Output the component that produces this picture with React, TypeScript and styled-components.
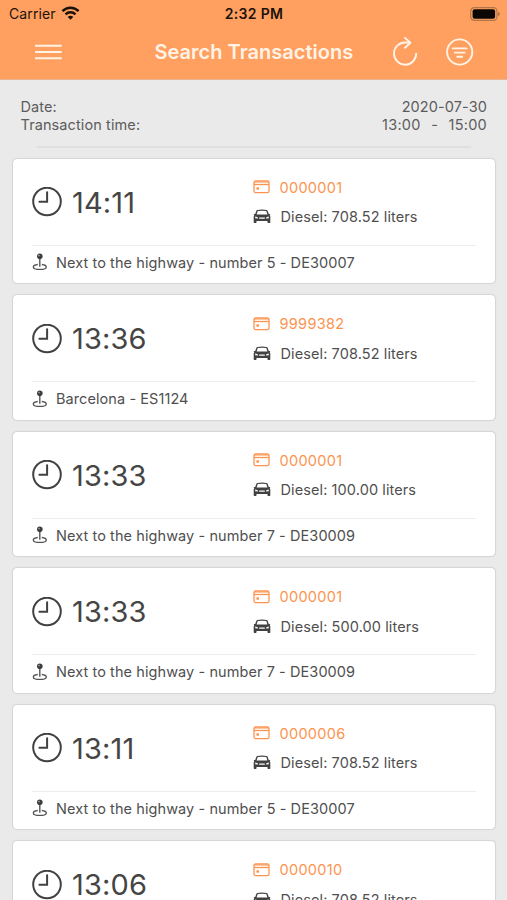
import React from "react";
import styled, { createGlobalStyle } from "styled-components";

const GlobalStyle = createGlobalStyle`
  * { box-sizing: border-box; }
  html, body { margin: 0; padding: 0; height: 900px; overflow: hidden; background: #eaeaea; }
  body { font-family: Inter, "Liberation Sans", sans-serif; color: #4c4c4c; }
  svg { display: block; flex: none; }
`;

const Screen = styled.main`
  width: 507px;
  height: 900px;
  overflow: hidden;
  display: flex;
  flex-direction: column;
  background: #eaeaea;
`;

const Header = styled.header`
  flex: none;
  height: 80px;
  background: #ffa061;
  border-bottom: 1px solid #e9b48f;
`;

const StatusBar = styled.div`
  height: 27px;
  padding: 0 7px 0 9px;
  display: grid;
  grid-template-columns: 1fr auto 1fr;
  align-items: center;
  color: #1c120b;
  font-size: 14px;
  line-height: 27px;
`;

const Carrier = styled.div`
  display: flex;
  align-items: center;
  gap: 5px;
  letter-spacing: 0.1px;
`;

const Clock = styled.div`
  margin-right: 1px;
  font-weight: 600;
  letter-spacing: 0.3px;
`;

const Battery = styled.div`
  display: flex;
  justify-content: flex-end;
`;

const NavBar = styled.nav`
  height: 50px;
  padding: 0 33px 0 34px;
  display: flex;
  align-items: center;
  color: #fff3e6;
`;

const Title = styled.h1`
  margin: 0 0 0 92.5px;
  width: 200px;
  font-size: 20px;
  line-height: 51px;
  font-weight: 600;
  letter-spacing: 0.02px;
  white-space: nowrap;
`;

const Actions = styled.div`
  margin-left: auto;
  display: flex;
  align-items: center;
  gap: 28px;
`;

const Summary = styled.section`
  flex: none;
  height: 65.5px;
  padding: 18px 20px 0 20.5px;
  font-size: 14.5px;
  line-height: 18px;
  color: #5c5c5c;
`;

const SummaryRow = styled.div`
  display: flex;
  justify-content: space-between;
`;

const SummaryText = styled.span`
  letter-spacing: 0.1px;
`;

const TimeRange = styled.span`
  display: flex;
  gap: 10.5px;
  letter-spacing: 0.25px;
`;

const Rule = styled.hr`
  flex: none;
  width: 434px;
  height: 2px;
  margin: 0 0 10px 37px;
  border: 0;
  background: #dfdfdf;
`;

const List = styled.section`
  display: flex;
  flex-direction: column;
  gap: 10px;
  padding: 0 11px 0 12px;
`;

const Card = styled.article`
  flex: none;
  height: 126.5px;
  padding: 0 19px;
  background: #fff;
  border: 1px solid #d6d6d6;
  border-radius: 5px;
  box-shadow: 0 0 1px #d6d6d6;
`;

const CardTop = styled.div`
  height: 87px;
  display: grid;
  grid-template-columns: 221px 1fr;
  border-bottom: 1px solid #ececec;
`;

const Time = styled.div`
  display: flex;
  align-items: center;
  gap: 10px;
  padding-top: 1.5px;
  font-size: 29px;
  letter-spacing: 0.15px;
  color: #454545;
`;

const Details = styled.div`
  padding-top: 14px;
`;

const Detail = styled.div<{ $accent?: boolean }>`
  height: 29.5px;
  display: flex;
  align-items: center;
  gap: 9.5px;
  font-size: 14.5px;
  letter-spacing: ${(p) => (p.$accent ? "0.3px" : "0.1px")};
  white-space: nowrap;
  color: ${(p) => (p.$accent ? "#fc9450" : "#4f4f4f")};
`;

const Place = styled.div`
  height: 33px;
  display: flex;
  align-items: center;
  gap: 8px;
  font-size: 14.5px;
  letter-spacing: 0.08px;
  color: #4f4f4f;
  white-space: nowrap;
`;

const WifiIcon = () => (
  <svg width="19" height="15" viewBox="0 0 19 15" fill="none" stroke="#1c120b" strokeWidth="2.5">
    <path d="M1.4 5.1C6 .5 13 .5 17.6 5.1" />
    <path d="M4.5 8.3c2.8-2.7 7.2-2.7 10 0" />
    <path d="M9.5 13.7 6.7 10.9c1.6-1.5 4-1.5 5.6 0z" fill="#1c120b" stroke="none" />
  </svg>
);

const BatteryIcon = () => (
  <svg width="30" height="14" viewBox="0 0 30 14">
    <rect x="0.7" y="0.7" width="26.3" height="12.6" rx="3.6" fill="none" stroke="#b07548" strokeWidth="1.2" />
    <rect x="2.6" y="2.2" width="22.5" height="9.6" rx="2" fill="#0b0704" />
    <path d="M28.2 4.8c2 .8 2 3.6 0 4.4z" fill="#a66c44" />
  </svg>
);

const MenuIcon = () => (
  <svg width="28" height="16" viewBox="0 0 28 16" stroke="currentColor" strokeWidth="1.9">
    <path d="M1 1.7h26.7M1 8h26.7M1 14.2h26.7" />
  </svg>
);

const RefreshIcon = () => (
  <svg width="26" height="30" viewBox="0 0 26 30" fill="none" stroke="currentColor" strokeWidth="1.9" strokeLinecap="round" strokeLinejoin="round">
    <path d="M24.2 16.6a11.1 11.1 0 1 1-11-11.1h4.6" />
    <path d="m13 .9 5.4 4.8-5.4 5" />
  </svg>
);

const FilterIcon = () => (
  <svg width="28" height="28" viewBox="0 0 28 28" fill="none" stroke="currentColor" strokeWidth="1.9" strokeLinecap="round">
    <circle cx="13.7" cy="14" r="12.6" />
    <path d="M6.7 10.4h14M8.7 14.6h10M11.2 18.8h5" />
  </svg>
);

const ClockIcon = () => (
  <svg width="30" height="30" viewBox="0 0 30 30" fill="none" stroke="#414141" strokeWidth="2" strokeLinecap="round">
    <circle cx="15" cy="14.5" r="13.8" />
    <path d="M15.1 5.3v9.5H7.4" />
  </svg>
);

const CardIcon = () => (
  <svg width="17" height="14" viewBox="0 0 17 14" fill="none" stroke="currentColor" strokeWidth="1.3">
    <rect x="1" y="1" width="15" height="11.6" rx="1.6" />
    <path d="M1 2.2h15" strokeWidth="1.5" opacity="0.55" />
    <path d="M1 4.5h15" />
    <rect x="3.4" y="7.3" width="2.6" height="2.4" fill="currentColor" stroke="none" />
  </svg>
);

const CarIcon = () => (
  <svg width="18" height="15" viewBox="0 0 18 15" fill="#414141">
    <path
      fillRule="evenodd"
      d="M4.4.9Q9 0 13.6.9q.8.2 1.1 1l1.1 3.2.9-.2q.7 0 .6.6l-.7.5.7 1.3v6q0 .7-.7.7h-1.4q-.7 0-.7-.7v-1.4h-11v1.4q0 .7-.7.7H1.4q-.7 0-.7-.7v-6L1.4 6l-.7-.5q-.1-.6.6-.6l.9.2 1.1-3.2q.3-.8 1.1-1ZM4.7 2.1 3.6 5.5h10.8l-1.1-3.4Q9 1.4 4.7 2.1ZM2.2 7.6v1.6l2.7.3q.3-1.2-.8-1.6ZM15.8 7.6l-1.9.3q-1.1.4-.8 1.6l2.7-.3ZM6.2 8.4v1.4h5.6V8.4Z"
    />
  </svg>
);

const PinIcon = () => (
  <svg width="16" height="18" viewBox="0 0 16 18" fill="none" stroke="#555" strokeWidth="1.3">
    <path d="M5.8 11.5C3 11.8 1.3 12.7 1.3 13.9c0 1.5 2.8 2.5 6.5 2.5s6.5-1 6.5-2.5c0-1.2-1.7-2.1-4.5-2.4" />
    <path d="M7.8 5.5v8.2" strokeWidth="1.4" />
    <circle cx="7.8" cy="3.3" r="2.8" fill="#3e3e3e" stroke="none" />
    <circle cx="7" cy="2.6" r="0.8" fill="#aaa" stroke="none" />
  </svg>
);

interface Transaction {
  time: string;
  card: string;
  liters: string;
  place: string;
}

const transactions: Transaction[] = [
  { time: "14:11", card: "0000001", liters: "708.52", place: "Next to the highway - number 5 - DE30007" },
  { time: "13:36", card: "9999382", liters: "708.52", place: "Barcelona - ES1124" },
  { time: "13:33", card: "0000001", liters: "100.00", place: "Next to the highway - number 7 - DE30009" },
  { time: "13:33", card: "0000001", liters: "500.00", place: "Next to the highway - number 7 - DE30009" },
  { time: "13:11", card: "0000006", liters: "708.52", place: "Next to the highway - number 5 - DE30007" },
  { time: "13:06", card: "0000010", liters: "708.52", place: "Next to the highway - number 5 - DE30007" },
];

const TransactionCard = ({ time, card, liters, place }: Transaction) => (
  <Card>
    <CardTop>
      <Time>
        <ClockIcon />
        <span>{time}</span>
      </Time>
      <Details>
        <Detail $accent>
          <CardIcon />
          <span>{card}</span>
        </Detail>
        <Detail>
          <CarIcon />
          <span>Diesel: {liters} liters</span>
        </Detail>
      </Details>
    </CardTop>
    <Place>
      <PinIcon />
      <span>{place}</span>
    </Place>
  </Card>
);

export default function App() {
  return (
    <Screen>
      <GlobalStyle />
      <Header>
        <StatusBar>
          <Carrier>
            Carrier
            <WifiIcon />
          </Carrier>
          <Clock>2:32 PM</Clock>
          <Battery>
            <BatteryIcon />
          </Battery>
        </StatusBar>
        <NavBar>
          <MenuIcon />
          <Title>Search Transactions</Title>
          <Actions>
            <RefreshIcon />
            <FilterIcon />
          </Actions>
        </NavBar>
      </Header>
      <Summary>
        <SummaryRow>
          <SummaryText>Date:</SummaryText>
          <SummaryText>2020-07-30</SummaryText>
        </SummaryRow>
        <SummaryRow>
          <SummaryText>Transaction time:</SummaryText>
          <TimeRange>
            <span>13:00</span>
            <span>-</span>
            <span>15:00</span>
          </TimeRange>
        </SummaryRow>
      </Summary>
      <Rule />
      <List>
        {transactions.map((t, i) => (
          <TransactionCard key={i} {...t} />
        ))}
      </List>
    </Screen>
  );
}
